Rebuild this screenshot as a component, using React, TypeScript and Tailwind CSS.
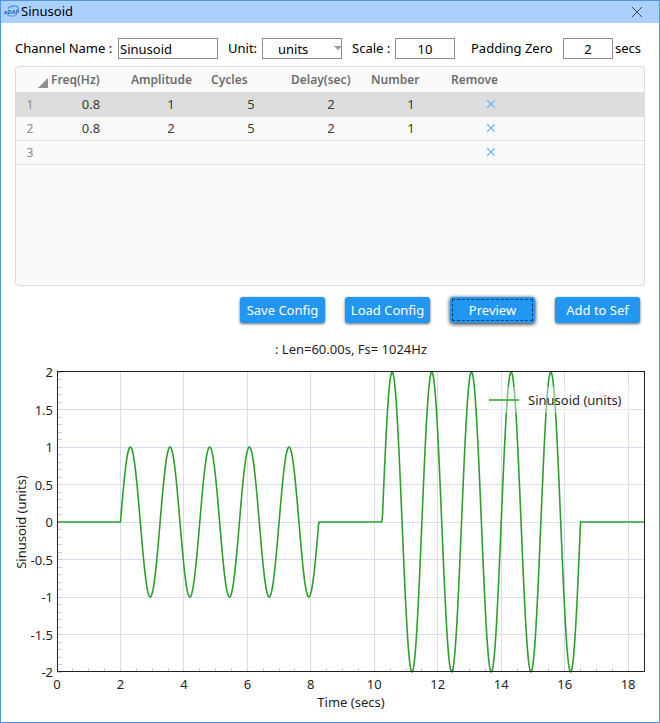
import { useState } from "react";

type Row = {
  freq: number;
  amplitude: number;
  cycles: number;
  delay: number;
  number: number;
};

const COLUMNS = ["Freq(Hz)", "Amplitude", "Cycles", "Delay(sec)", "Number"];

const INITIAL_ROWS: Row[] = [
  { freq: 0.8, amplitude: 1, cycles: 5, delay: 2, number: 1 },
  { freq: 0.8, amplitude: 2, cycles: 5, delay: 2, number: 1 },
];

// Plot area inside the svg
const LEFT = 56;
const RIGHT = 643;
const TOP = 40;
const BOTTOM = 340;
const X_MAX = 18.5;

const toX = (t: number) => LEFT + (t / X_MAX) * (RIGHT - LEFT);
const toY = (v: number) => (TOP + BOTTOM) / 2 - v * 75;

const X_MAJOR = [0, 2, 4, 6, 8, 10, 12, 14, 16, 18];
const Y_MAJOR = [2, 1.5, 1, 0.5, 0, -0.5, -1, -1.5, -2];
const X_MINOR = Array.from({ length: 37 }, (_, i) => i * 0.5);
const Y_MINOR = Array.from({ length: 41 }, (_, i) => -2 + i * 0.1);

const signalAt = (rows: Row[], time: number) => {
  let start = 0;
  for (const row of rows) {
    for (let n = 0; n < row.number; n++) {
      start += row.delay;
      const length = row.cycles / row.freq;
      if (time < start) return 0;
      if (time < start + length) {
        return row.amplitude * Math.sin(2 * Math.PI * row.freq * (time - start));
      }
      start += length;
    }
  }
  return 0;
};

const buildPath = (rows: Row[]) => {
  const points: string[] = [];
  for (let i = 0; i <= 925; i++) {
    const t = i * 0.02;
    points.push(`${toX(t).toFixed(2)} ${toY(signalAt(rows, t)).toFixed(2)}`);
  }
  return `M${points.join("L")}`;
};

const Logo = () => (
  <svg className="h-4 w-4" viewBox="0 0 16 16" fill="none" aria-hidden="true">
    <path d="M4 4.5C7 1.5 12 1 14 3.500c.6 1 .2 2-.6 3" stroke="#3f9be8" strokeWidth="1.4" />
    <path d="M3 9.800c2 3 7 3 10 .4" stroke="#5fa9ea" strokeWidth="1.2" />
    <text x="0" y="9.500" fontSize="6" fontWeight="700" fontStyle="italic" fill="#2b5fae" fontFamily="Open Sans, sans-serif">
      eDAP
    </text>
  </svg>
);

const Chart = ({ rows }: { rows: Row[] }) => (
  <svg className="block h-auto w-full" viewBox="0 0 658 386" fontSize="13" fill="#1f1f1f" role="img" aria-label="Sinusoid (units)">
    <text x="350" y="22" textAnchor="middle">
      : Len=60.00s, Fs= 1024Hz
    </text>

    {/* Grid */}
    <g stroke="#dcdcf0" shapeRendering="crispEdges">
      {X_MAJOR.slice(1).map((t) => (
        <line key={t} x1={toX(t)} x2={toX(t)} y1={TOP} y2={BOTTOM} />
      ))}
      {Y_MAJOR.slice(1, -1).map((v) => (
        <line key={v} x1={LEFT} x2={RIGHT} y1={toY(v)} y2={toY(v)} />
      ))}
    </g>

    {/* Ticks */}
    <g stroke="#d0d0d0" shapeRendering="crispEdges">
      {X_MINOR.map((t) => (
        <line key={t} x1={toX(t)} x2={toX(t)} y1={BOTTOM - 4} y2={BOTTOM} />
      ))}
      {Y_MINOR.map((v) => (
        <line key={v} x1={LEFT} x2={LEFT + 5} y1={toY(v)} y2={toY(v)} />
      ))}
    </g>

    <path d={buildPath(rows)} fill="none" stroke="#2ca02c" strokeWidth="1.6" strokeLinejoin="round" />

    {/* Frame */}
    <rect x={LEFT + 0.5} y={TOP - 0.5} width={RIGHT - LEFT} height={BOTTOM - TOP} fill="none" stroke="#1f1f24" />

    {/* Legend */}
    <rect x="484" y="55" width="144" height="26" fill="#fff" fillOpacity="0.4" />
    <line x1="488" x2="518" y1="68" y2="68" stroke="#2ca02c" strokeWidth="1.5" />
    <text x="527" y="73">Sinusoid (units)</text>

    {/* Labels */}
    {X_MAJOR.map((t) => (
      <text key={t} x={toX(t)} y="357" textAnchor="middle">
        {t}
      </text>
    ))}
    {Y_MAJOR.map((v) => (
      <text key={v} x="52" y={toY(v) + 5} textAnchor="end">
        {v}
      </text>
    ))}
    <text x="350" y="375" textAnchor="middle">
      Time (secs)
    </text>
    <text x="25" y="190" textAnchor="middle" transform="rotate(-90 25 190)">
      Sinusoid (units)
    </text>
  </svg>
);

const FIELD = "h-[21px] border border-[#8c8c8c] bg-white text-[13px] leading-4 outline-none";
const BUTTON =
  "h-[26px] w-[85px] rounded-[3px] bg-[#2196f3] pt-px text-[13px] whitespace-nowrap text-white";
const SHADOW = "shadow-[0_1px_3px_rgba(0,0,0,0.6)]";

const App = () => {
  const [rows, setRows] = useState<Row[]>(INITIAL_ROWS);

  const removeRow = (index: number) => setRows(rows.filter((_, i) => i !== index));

  return (
    <div className="flex min-h-screen flex-col border border-[#4f96dc] bg-white font-['Noto_Sans','Open_Sans',sans-serif] text-[13px] text-black">
      <header className="flex h-[22px] items-center bg-[#abd0fd] pr-4 pl-[3px]">
        <Logo />
        <h1 className="ml-px flex-1 text-[13px]">Sinusoid</h1>
        <button type="button" aria-label="Close">
          <svg className="h-3 w-3" viewBox="0 0 12 12" stroke="#3d4653" aria-hidden="true">
            <path d="M1 1l10 10M11 1L1 11" />
          </svg>
        </button>
      </header>

      <form className="mt-[15px] flex h-[21px] items-center pl-[14px] whitespace-nowrap">
        <label htmlFor="channel" className="w-[103px]">
          Channel Name :
        </label>
        <input id="channel" defaultValue="Sinusoid" className={`${FIELD} w-[100px] px-px`} />
        <label htmlFor="unit" className="ml-[10px] w-[34px]">
          Unit:
        </label>
        <div className="relative">
          <select id="unit" className={`${FIELD} block w-[80px] appearance-none pl-[15px]`}>
            <option>units</option>
          </select>
          <svg className="pointer-events-none absolute top-2 right-0 h-1 w-2" viewBox="0 0 8 4" fill="#999" aria-hidden="true">
            <path d="M0 0h8L4 4z" />
          </svg>
        </div>
        <label htmlFor="scale" className="ml-[10px] w-[43px]">
          Scale :
        </label>
        <input id="scale" defaultValue="10" className={`${FIELD} w-[60px] text-center`} />
        <label htmlFor="padding" className="ml-4 w-[92px]">
          Padding Zero
        </label>
        <input id="padding" defaultValue="2" className={`${FIELD} w-[50px] text-center`} />
        <span className="ml-[2px]">secs</span>
      </form>

      <div className="mx-[14px] mt-[7px] h-[220px] overflow-hidden rounded border border-[#dcdcdc] bg-[#fafafa]">
        <table className="w-full table-fixed border-collapse text-[#3a3a3a]">
          <thead>
            <tr className="h-[25px] border-b border-[#dcdcdc] text-left text-[#6e6e6e]">
              <th className="w-[35px] p-0">
                <svg className="mt-2 ml-[22px] h-[10px] w-[10px]" viewBox="0 0 10 10" fill="#8f8f8f" aria-hidden="true">
                  <path d="M10 0v10H0z" />
                </svg>
              </th>
              {COLUMNS.map((name) => (
                <th key={name} className="w-[80px] p-0 pt-[2px] text-xs font-semibold">
                  {name}
                </th>
              ))}
              <th className="w-[80px] p-0 pt-[2px] text-xs font-semibold">Remove</th>
              <th className="p-0" />
            </tr>
          </thead>
          <tbody>
            {[...rows, null].map((row, index) => (
              <tr key={index} className="h-6 border-b border-[#dcdcdc] text-center first:bg-[#dddddd]">
                <td className="p-0 pt-px pr-[7px] text-xs text-[#8a8a8a]">{index + 1}</td>
                <td className="p-0 pt-px">{row?.freq}</td>
                <td className="p-0 pt-px">{row?.amplitude}</td>
                <td className="p-0 pt-px">{row?.cycles}</td>
                <td className="p-0 pt-px">{row?.delay}</td>
                <td className="p-0 pt-px">{row?.number}</td>
                <td className="p-0">
                  <button type="button" aria-label="Remove row" className="block w-full" onClick={() => removeRow(index)}>
                    <svg className="mx-auto h-2 w-2" viewBox="0 0 8 8" stroke="#6dbaf5" strokeWidth="1.3" aria-hidden="true">
                      <path d="M0 0l8 8M8 0L0 8" />
                    </svg>
                  </button>
                </td>
                <td className="p-0" />
              </tr>
            ))}
          </tbody>
        </table>
      </div>

      <div className="mt-[11px] mb-[9px] flex justify-end gap-5 pr-[19px]">
        <button type="button" className={`${BUTTON} ${SHADOW}`}>
          Save Config
        </button>
        <button type="button" className={`${BUTTON} ${SHADOW}`}>
          Load Config
        </button>
        <button
          type="button"
          className={`${BUTTON} shadow-[0_1px_4px_rgba(0,0,0,0.9)] outline-1 -outline-offset-3 outline-[#123a66] outline-dashed`}
        >
          Preview
        </button>
        <button type="button" className={`${BUTTON} ${SHADOW}`}>
          Add to Sef
        </button>
      </div>

      <Chart rows={rows} />
    </div>
  );
};

export default App;
